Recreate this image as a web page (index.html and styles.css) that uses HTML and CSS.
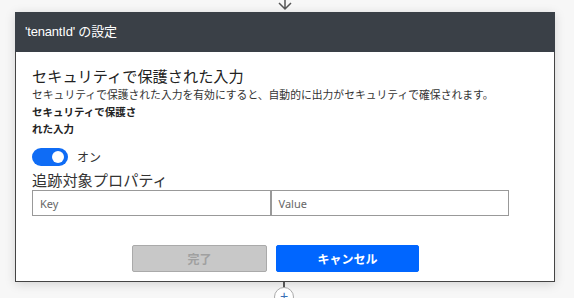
FILE: index.html
```html
<!DOCTYPE html>
<html lang="ja">
<head>
    <meta charset="UTF-8">
    <title>'tenantId' の設定</title>
    <link rel="stylesheet" href="styles.css">
</head>
<body>
    <div id="canvas">
        <svg class="arrow-in" width="16" height="12" viewBox="0 0 16 12">
            <path d="M8 0 V10 M2 4 L8 10 L14 4" fill="none" stroke="#555" stroke-width="1.5"/>
        </svg>
        <div class="card">
            <div class="card-header">'tenantId' の設定</div>
            <div class="card-body">
                <div class="section-title">セキュリティで保護された入力</div>
                <div class="section-desc">セキュリティで保護された入力を有効にすると、自動的に出力がセキュリティで確保されます。</div>
                <div class="field-label">セキュリティで保護された入力</div>
                <div class="toggle-row">
                    <span class="toggle"><span class="knob"></span></span>
                    <span class="toggle-text">オン</span>
                </div>
                <div class="section-title props">追跡対象プロパティ</div>
                <div class="kv">
                    <div class="kv-cell">Key</div>
                    <div class="kv-cell">Value</div>
                </div>
                <div class="actions">
                    <button class="btn btn-done">完了</button>
                    <button class="btn btn-cancel">キャンセル</button>
                </div>
            </div>
        </div>
        <div class="connector"></div>
        <div class="add-step">+</div>
    </div>
</body>
</html>
```

FILE: styles.css
```css
body {
    margin: 0;
    background-color: #f7f7f7;
    font-family: "Segoe UI", "Noto Sans", "Noto Sans CJK JP", sans-serif;
    color: #222;
    overflow: hidden;
}
#canvas {
    position: relative;
    width: 574px;
    height: 298px;
    padding: 12px 0 0 15px;
    box-sizing: border-box;
}
.arrow-in {
    position: absolute;
    top: -1px;
    left: 277px;
}
.card {
    width: 540px;
    height: 270px;
    box-sizing: border-box;
    background: #fff;
    border: 1px solid #444;
    border-top: none;
    box-shadow: 0 2px 10px rgba(0, 0, 0, 0.15);
    display: flex;
    flex-direction: column;
}
.card-header {
    height: 40px;
    margin: 0 -1px;
    background-color: #3a4047;
    color: #fff;
    font-family: "Liberation Sans", "Noto Sans CJK JP", sans-serif;
    font-size: 13px;
    line-height: 40px;
    padding-left: 10px;
    letter-spacing: -0.2px;
}
.card-body {
    flex: 1;
    padding: 14px 0 0 16px;
    display: flex;
    flex-direction: column;
}
.section-title {
    font-size: 15.2px;
    line-height: 20px;
    color: #222;
}
.section-desc {
    font-size: 10.8px;
    line-height: 17px;
    color: #333;
}
.field-label {
    width: 112px;
    font-size: 10.5px;
    font-weight: bold;
    line-height: 17px;
    margin-top: 1px;
}
.toggle-row {
    display: flex;
    align-items: center;
    gap: 9px;
    margin-top: 10px;
    height: 18px;
}
.toggle {
    width: 36px;
    height: 18px;
    border-radius: 9px;
    background-color: #0f6cf5;
    position: relative;
}
.knob {
    position: absolute;
    right: 4px;
    top: 3px;
    width: 12px;
    height: 12px;
    border-radius: 50%;
    background: #fff;
}
.toggle-text {
    font-size: 12px;
    color: #333;
}
.props {
    margin-top: 4px;
    color: #333;
}
.kv {
    display: flex;
    width: 477px;
    height: 26px;
    box-sizing: border-box;
    border: 1px solid #999;
}
.kv-cell {
    flex: 1;
    padding-left: 7px;
    font-size: 11px;
    line-height: 25px;
    color: #666;
}
.kv-cell + .kv-cell {
    border-left: 2px solid #999;
}
.actions {
    display: flex;
    gap: 9px;
    margin-top: 29px;
    padding-left: 100px;
}
.btn {
    height: 27px;
    font-family: "Noto Sans CJK JP", sans-serif;
    font-size: 12px;
    font-weight: bold;
    border-radius: 2px;
    padding: 0;
}
.btn-done {
    width: 135px;
    background-color: #c8c8c8;
    border: 1px solid #aaa;
    color: #a0a0a0;
}
.btn-cancel {
    width: 143px;
    background-color: #0066ff;
    border: 1px solid #0066ff;
    color: #fff;
}
.connector {
    position: absolute;
    left: 283px;
    top: 282px;
    width: 2px;
    height: 6px;
    background: #555;
}
.add-step {
    position: absolute;
    left: 274px;
    top: 287px;
    width: 20px;
    height: 20px;
    box-sizing: border-box;
    border: 1px solid #aaa;
    border-radius: 50%;
    background: #fff;
    color: #3a6fb5;
    text-align: center;
    font-family: "Liberation Sans", sans-serif;
    font-size: 14px;
    line-height: 16px;
}
```
